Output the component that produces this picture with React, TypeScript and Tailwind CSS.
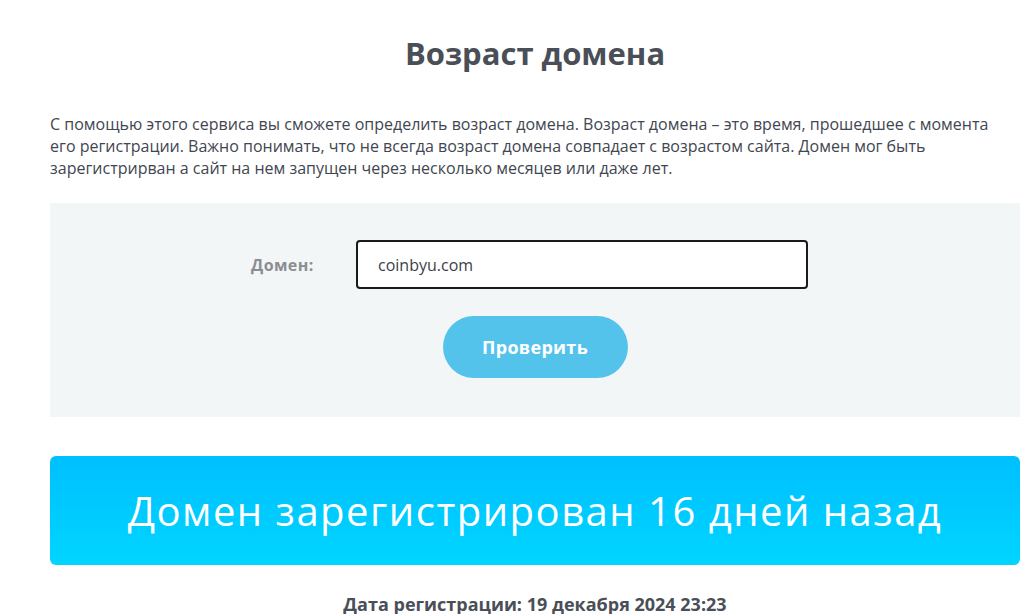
import { useState } from 'react';

export default function App() {
  const [domain, setDomain] = useState('coinbyu.com');

  return (
    <div className="min-h-[614px] bg-white" style={{ fontFamily: '"Open Sans", "Noto Sans", sans-serif' }}>
      <div className="ml-[50px] w-[970px]">
        {/* Title */}
        <h1 className="pt-[33px] text-center text-[31px] leading-[40px] font-bold text-[#4a4f57]">
          Возраст домена
        </h1>

        {/* Description */}
        <p className="mt-[40px] text-[16px] leading-[22px] text-[#414650]">
          С помощью этого сервиса вы сможете определить возраст домена. Возраст домена – это время, прошедшее с момента
          <br />
          его регистрации. Важно понимать, что не всегда возраст домена совпадает с возрастом сайта. Домен мог быть
          <br />
          зарегистрирван а сайт на нем запущен через несколько месяцев или даже лет.
        </p>

        {/* Form */}
        <div className="mt-[24px] h-[214px] bg-[#f3f6f7] pt-[37px]">
          <div className="flex items-center">
            <label className="ml-[201px] w-[105px] text-[16px] tracking-[0.4px] font-bold text-[#8b8e91]">Домен:</label>
            <input
              value={domain}
              onChange={(e) => setDomain(e.target.value)}
              className="h-[49px] w-[452px] rounded-[4px] border-2 border-[#1a1a1a] bg-white px-[20px] text-[16px] text-[#3c4048] outline-none"
            />
          </div>
          <div className="mt-[27px] flex justify-center">
            <button className="h-[62px] w-[185px] rounded-full bg-[#54c3ec] text-[18px] tracking-[0.3px] font-bold text-white">
              Проверить
            </button>
          </div>
        </div>

        {/* Result */}
        <div className="mt-[39px] flex h-[109px] items-center justify-center rounded-[6px] bg-gradient-to-b from-[#00bfff] to-[#00d5ff]">
          <span className="text-[40px] font-normal tracking-[1.5px] text-white">
            Домен зарегистрирован 16 дней назад
          </span>
        </div>

        <p className="mt-[29px] text-center text-[18px] leading-[20px] font-bold text-[#4a4f57]">
          Дата регистрации: 19 декабря 2024 23:23
        </p>
      </div>
    </div>
  );
}
